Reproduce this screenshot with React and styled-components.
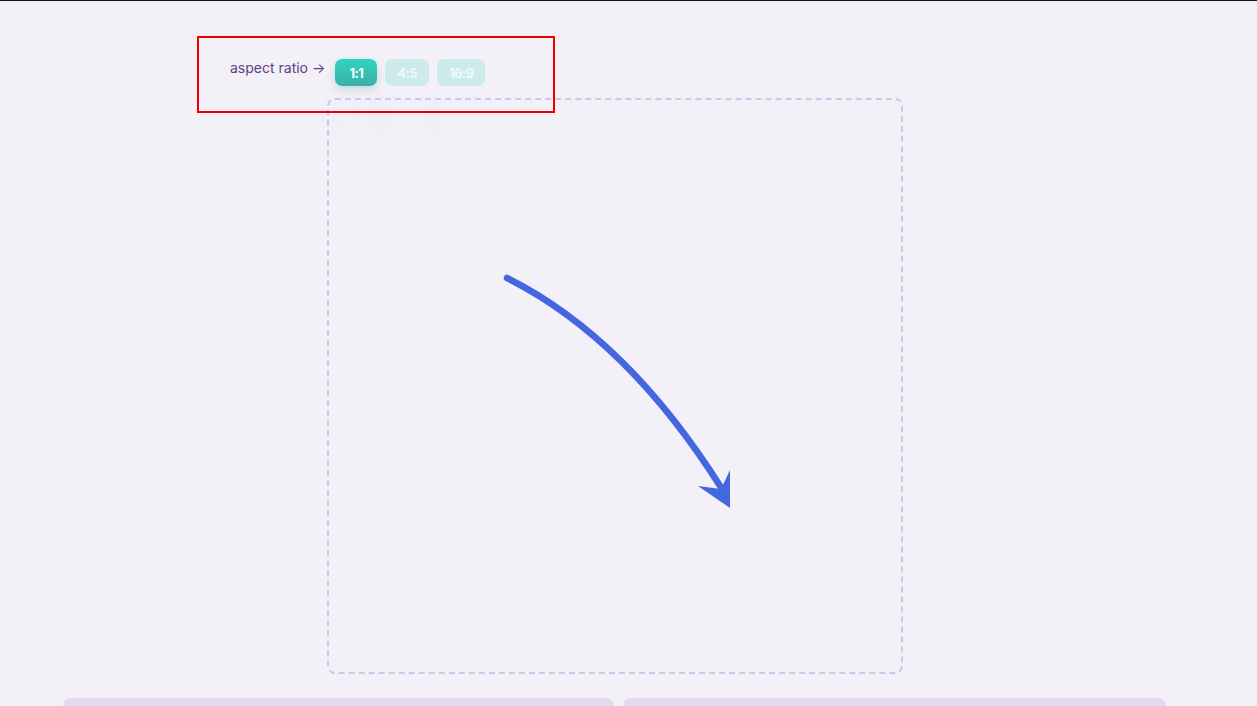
import styled, { createGlobalStyle } from 'styled-components'

const GlobalStyle = createGlobalStyle`
  html, body {
    margin: 0;
    padding: 0;
    background: #f3f0f8;
    font-family: "Inter", "Open Sans", sans-serif;
    overflow: hidden;
  }
`

const ratios = ['1:1', '4:5', '16:9']

const Arrow = () => (
  <svg width='576' height='576' viewBox='327 98 576 576'>
    <path
      d='M507 278 Q627 338 722 489'
      fill='none'
      stroke='#4466e0'
      strokeWidth='6.5'
      strokeLinecap='round'
    />
    <polygon points='730,470 730,508 698,486 721,489' fill='#4466e0' />
  </svg>
)

export default function App() {
  return (
    <>
      <GlobalStyle />
      <Page>
        <Content>
          <Toolbar>
            <Label>aspect ratio →</Label>
            {ratios.map((r, i) => (
              <RatioButton key={r} active={i === 0}>
                {r}
              </RatioButton>
            ))}
          </Toolbar>
          <Canvas>
            <Arrow />
          </Canvas>
          <Cards>
            <Card />
            <Card />
          </Cards>
        </Content>
        <Highlight />
      </Page>
    </>
  )
}

const Page = styled.div`
  position: relative;
  min-height: 706px;
  border-top: 1px solid #1b0c2e;
  background: #f3f0f8;
`

const Content = styled.div`
  width: 1103px;
  margin-left: 63px;
  padding-top: 58px;
  display: flex;
  flex-direction: column;
`

const Toolbar = styled.div`
  display: flex;
  align-items: center;
  gap: 8px;
  padding-left: 167px;
  height: 27px;
`

const Label = styled.span`
  font-size: 14px;
  color: #5b3f86;
  margin-bottom: 10px;
  margin-right: 2px;
`

const RatioButton = styled.button`
  height: 27px;
  min-width: 42px;
  padding: 0 12px;
  border: none;
  border-radius: 7px;
  font-family: "Inter", "Open Sans", sans-serif;
  font-weight: 700;
  font-size: 13px;
  letter-spacing: -0.6px;
  color: ${p => (p.active ? '#ffffff' : '#f0f9fa')};
  background: ${p => (p.active ? 'linear-gradient(180deg, #2fd3c1, #3bb0a7)' : '#cdeaed')};
  box-shadow: ${p =>
    p.active
      ? '0 3px 8px rgba(60, 160, 150, 0.25), 0 40px 40px rgba(150, 120, 200, 0.035)'
      : '0 40px 40px rgba(150, 120, 200, 0.03)'};
`

const Canvas = styled.div`
  align-self: center;
  width: 576px;
  height: 576px;
  margin-top: 12px;
  box-sizing: border-box;
  border: 2px dashed #d0c6ea;
  border-radius: 8px;
  overflow: hidden;

  svg {
    display: block;
    margin: -2px;
  }
`

const Cards = styled.div`
  display: grid;
  grid-template-columns: 551px 543px;
  gap: 9px;
  margin-top: 24px;
`

const Card = styled.div`
  height: 200px;
  background: #e3daf0;
  border-radius: 8px;
`

const Highlight = styled.div`
  position: absolute;
  left: 197px;
  top: 35px;
  width: 358px;
  height: 77px;
  box-sizing: border-box;
  border: 2px solid #ee0000;
  pointer-events: none;
`
